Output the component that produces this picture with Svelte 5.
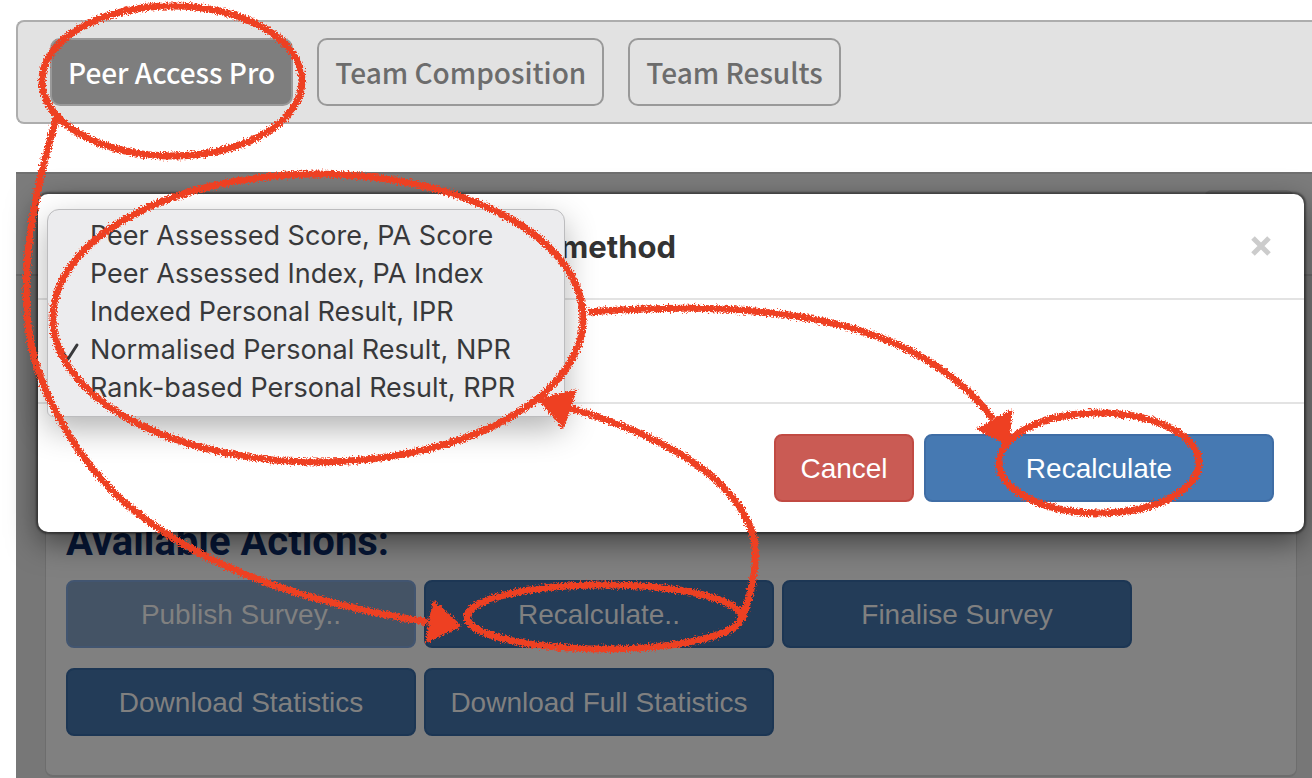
<script>
  const tabs = ['Peer Access Pro', 'Team Composition', 'Team Results'];
  const methods = [
    'Peer Assessed Score, PA Score',
    'Peer Assessed Index, PA Index',
    'Indexed Personal Result, IPR',
    'Normalised Personal Result, NPR',
    'Rank-based Personal Result, RPR'
  ];
  const actions = [
    { label: 'Publish Survey..', disabled: true },
    { label: 'Recalculate..' },
    { label: 'Finalise Survey' },
    { label: 'Download Statistics' },
    { label: 'Download Full Statistics' }
  ];
  let activeTab = $state(tabs[0]);
  let method = $state(methods[3]);
</script>

<div class="page">
  <nav class="tabs">
    {#each tabs as tab}
      <button class="tab" class:active={tab === activeTab} onclick={() => (activeTab = tab)}>{tab}</button>
    {/each}
  </nav>

  <main class="stage">
    <div class="stage-head"></div>
    <section class="card">
      <h2>Available Actions:</h2>
      <div class="actions">
        {#each actions as action}
          <button class="btn dimmed" disabled={action.disabled}>{action.label}</button>
        {/each}
      </div>
    </section>

    <div class="peek"></div>
    <div class="modal" role="dialog" aria-labelledby="modal-title">
      <header>
        <h1 id="modal-title">method</h1>
        <button class="close" aria-label="×">
          <svg viewBox="0 0 20 20" width="20" height="20"><path d="M2 2L18 18M18 2L2 18" /></svg>
        </button>
      </header>
      <div class="modal-body"></div>
      <footer>
        <button class="btn danger">Cancel</button>
        <button class="btn primary">Recalculate</button>
      </footer>
      <select class="menu" size="5" aria-labelledby="modal-title" bind:value={method}>
        {#each methods as m}
          <option value={m}>{m}</option>
        {/each}
      </select>
    </div>
  </main>

  <svg class="marks" viewBox="0 0 1312 778" width="1312" height="778" aria-hidden="true">
    <defs>
      <filter id="crayon" filterUnits="userSpaceOnUse" x="0" y="0" width="1312" height="778">
        <feTurbulence type="fractalNoise" baseFrequency="0.6" numOctaves="2" seed="4" result="grain" />
        <feDisplacementMap in="SourceGraphic" in2="grain" scale="7" xChannelSelector="R" yChannelSelector="G" />
      </filter>
    </defs>
    <g filter="url(#crayon)">
      <ellipse cx="172" cy="81" rx="130" ry="75" />
      <ellipse cx="318" cy="318" rx="265" ry="144" />
      <ellipse cx="604" cy="617" rx="137" ry="32" />
      <ellipse cx="1099" cy="463" rx="100" ry="50" />
      <path d="M57 116C36 186 23 250 27 311C29 386 86 476 139 514C211 571 310 604 428 622" />
      <path d="M588 312C720 303 905 301 993 419" />
      <path d="M742 619C753 590 758 560 754 540C743 492 691 444 570 408" />
      <path class="head" d="M434 602L460 626L427 641Z" />
      <path class="head" d="M1011 411L978 429L1008 444Z" />
      <path class="head" d="M540 400L575 391L563 427Z" />
    </g>
  </svg>
</div>

<style>
  :global(body) {
    margin: 0;
    background: #fff;
  }
  .page {
    position: relative;
    padding: 20px 0 0 16px;
    overflow: hidden;
    font-family: 'Liberation Sans', Arial, sans-serif;
  }
  button {
    font: inherit;
    cursor: pointer;
  }
  .tabs {
    display: flex;
    gap: 24px;
    padding: 16px 32px;
    border: 2px solid #adadad;
    border-right: 0;
    border-radius: 8px 0 0 8px;
    background: #e2e2e2;
  }
  .tab {
    height: 68px;
    padding: 0 16px;
    border: 2px solid #999;
    border-radius: 10px;
    background: transparent;
    color: #6c6c6c;
    font-family: 'Noto Sans CJK SC', sans-serif;
    font-size: 28px;
    font-weight: 500;
    line-height: 40px;
    white-space: nowrap;
  }
  .tab.active {
    background: #7e7e7e;
    color: #fff;
  }
  .stage {
    position: relative;
    margin-top: 48px;
    padding-bottom: 1px;
    background: #777;
  }
  .stage-head {
    height: 100px;
    border-top: 2px solid #707070;
    border-bottom: 2px solid #6b6b6b;
    background: #7c7c7c;
  }
  .card {
    margin: 14px 15px 0 29px;
    padding: 227px 20px 39px;
    border: 1px solid #6d6d6d;
    border-bottom-width: 2px;
    border-radius: 8px;
    background: #808080;
  }
  h2 {
    margin: 0 0 14px;
    color: #071737;
    font: 700 40px/48px Roboto, sans-serif;
  }
  .actions {
    display: flex;
    flex-wrap: wrap;
    gap: 20px 8px;
    max-width: 1100px;
  }
  .btn {
    box-sizing: border-box;
    width: 350px;
    height: 68px;
    padding: 2px 0 0;
    border: 2px solid;
    border-radius: 8px;
    color: #fff;
    font-size: 28px;
    line-height: 40px;
    white-space: nowrap;
  }
  .dimmed {
    border-color: #1c3654;
    background: #233c58;
    color: #808080;
  }
  .dimmed:disabled {
    border-color: #425570;
    background: #445365;
  }
  .danger {
    width: 140px;
    border-color: #c14a43;
    background: #ca5b54;
  }
  .primary {
    border-color: #3f6da5;
    background: #4679b2;
  }
  .peek {
    position: absolute;
    top: 18px;
    right: 18px;
    width: 90px;
    height: 20px;
    border-radius: 8px;
    background: #6d6d6d;
  }
  .modal {
    position: absolute;
    top: 22px;
    right: 8px;
    left: 22px;
    border-radius: 10px;
    background: #fff;
    box-shadow: 0 0 2px 2px rgba(0, 0, 0, 0.4), 0 10px 30px rgba(0, 0, 0, 0.5);
  }
  .modal header {
    display: flex;
    align-items: center;
    justify-content: space-between;
    height: 104px;
    padding: 0 33px 0 522px;
    border-bottom: 2px solid #e3e3e3;
  }
  h1 {
    margin: 0;
    padding-top: 2px;
    color: #333;
    font: 700 31px/40px Inter, sans-serif;
  }
  .close {
    display: flex;
    padding: 0;
    border: 0;
    background: none;
  }
  .close path {
    stroke: #ccc;
    stroke-width: 5;
  }
  .modal-body {
    height: 102px;
    border-bottom: 2px solid #e3e3e3;
  }
  footer {
    display: flex;
    justify-content: flex-end;
    gap: 10px;
    padding: 30px;
  }
  .menu {
    position: absolute;
    top: 15px;
    left: 9px;
    box-sizing: border-box;
    width: 518px;
    height: 208px;
    padding: 9px 0 7px;
    overflow: hidden;
    appearance: none;
    border: 1px solid #bcbcbe;
    border-radius: 12px 12px 6px 6px;
    outline: 0;
    background: #ececee;
    box-shadow: 0 12px 32px rgba(0, 0, 0, 0.3);
    color: #38393b;
    font: 400 27px/38px Inter, sans-serif;
  }
  .menu option {
    min-height: 38px;
    padding: 0 0 0 42px;
    color: #38393b;
    line-height: 38px;
  }
  .menu option:checked {
    background: url("data:image/svg+xml,%3Csvg xmlns='http://www.w3.org/2000/svg' width='20' height='20'%3E%3Cpath d='M3 11L8 17L17 3' fill='none' stroke='%2338393b' stroke-width='3' stroke-linecap='round' stroke-linejoin='round'/%3E%3C/svg%3E") 12px center no-repeat, linear-gradient(#ececee, #ececee);
    color: #38393b !important;
  }
  .marks {
    position: absolute;
    top: 0;
    left: 0;
    pointer-events: none;
  }
  .marks ellipse,
  .marks path {
    fill: none;
    stroke: #ee4023;
    stroke-width: 7;
  }
  .marks .head {
    fill: #ee4023;
    stroke-width: 3;
    stroke-linejoin: round;
  }
</style>
